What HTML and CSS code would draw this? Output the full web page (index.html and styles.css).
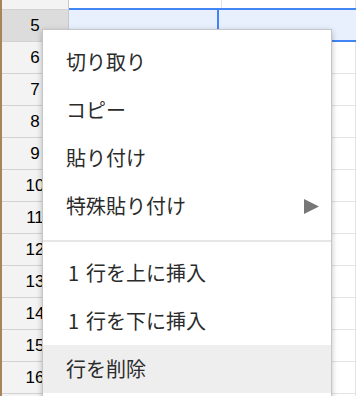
FILE: index.html
```html
<!DOCTYPE html>
<html lang="ja">
<head>
<meta charset="utf-8">
<link rel="stylesheet" href="styles.css">
</head>
<body>
<div class="page">
  <div class="strip"></div>
  <div class="sheet">
    <div class="row"><div class="rh"></div><div class="cell"></div><div class="cell"></div></div>
    <div class="row sel"><div class="rh">5</div><div class="cell active"></div><div class="cell"></div></div>
    <div class="row"><div class="rh">6</div><div class="cell"></div><div class="cell"></div></div>
    <div class="row"><div class="rh">7</div><div class="cell"></div><div class="cell"></div></div>
    <div class="row"><div class="rh">8</div><div class="cell"></div><div class="cell"></div></div>
    <div class="row"><div class="rh">9</div><div class="cell"></div><div class="cell"></div></div>
    <div class="row"><div class="rh">10</div><div class="cell"></div><div class="cell"></div></div>
    <div class="row"><div class="rh">11</div><div class="cell"></div><div class="cell"></div></div>
    <div class="row"><div class="rh">12</div><div class="cell"></div><div class="cell"></div></div>
    <div class="row"><div class="rh">13</div><div class="cell"></div><div class="cell"></div></div>
    <div class="row"><div class="rh">14</div><div class="cell"></div><div class="cell"></div></div>
    <div class="row"><div class="rh">15</div><div class="cell"></div><div class="cell"></div></div>
    <div class="row"><div class="rh">16</div><div class="cell"></div><div class="cell"></div></div>
    <div class="row"><div class="rh"></div><div class="cell"></div><div class="cell"></div></div>
  </div>
  <div class="menu">
    <div class="item">切り取り</div>
    <div class="item">コピー</div>
    <div class="item">貼り付け</div>
    <div class="item"><span>特殊貼り付け</span><svg class="arrow" width="15" height="15" viewBox="0 0 15 15"><polygon points="0,0 15,7.5 0,15" fill="#777"/></svg></div>
    <div class="sep"></div>
    <div class="item"><span class="num">1</span>行を上に挿入</div>
    <div class="item"><span class="num">1</span>行を下に挿入</div>
    <div class="item hover">行を削除</div>
  </div>
</div>
</body>
</html>
```
FILE: styles.css
```css
html, body {
  margin: 0;
  padding: 0;
  background: #fff;
}
body {
  width: 356px;
  height: 396px;
  overflow: hidden;
}
.page {
  position: relative;
  display: flex;
  width: 356px;
  height: 396px;
  overflow: hidden;
}
.strip {
  width: 2px;
  flex: none;
  background: #a8845a;
}
.sheet {
  flex: 1;
  margin-top: -22px;
  display: flex;
  flex-direction: column;
}
.row {
  position: relative;
  display: grid;
  grid-template-columns: 67px 153px 1fr;
  height: 32px;
  flex: none;
}
.rh {
  box-sizing: border-box;
  background: #f3f3f3;
  border-right: 1px solid #c8c8c8;
  border-bottom: 1px solid #d2d2d2;
  font-family: "Liberation Sans", Arial, sans-serif;
  font-size: 17px;
  color: #000;
  display: flex;
  align-items: center;
  justify-content: center;
}
.cell {
  box-sizing: border-box;
  border-bottom: 1px solid #e2e3e3;
  border-right: 1px solid #e2e3e3;
  position: relative;
}
.sel .rh {
  background: #dcdcdc;
}
.sel .cell {
  background: #e8f0fe;
  border-right-color: #e8f0fe;
}
.sel::after {
  content: "";
  position: absolute;
  left: 67px;
  right: 0;
  top: -2px;
  bottom: 0;
  border-top: 2px solid #4285f4;
  border-bottom: 2px solid #4285f4;
  pointer-events: none;
}
.active::after {
  content: "";
  position: absolute;
  top: -2px;
  bottom: 0;
  right: 2px;
  width: 2px;
  background: #4285f4;
}
.menu {
  position: absolute;
  left: 42px;
  top: 29px;
  width: 290px;
  box-sizing: border-box;
  background: #fff;
  border: 1px solid #c6c6c6;
  box-shadow: 0 2px 6px rgba(0, 0, 0, 0.25);
  padding: 8px 0 60px;
  font-family: "Noto Sans CJK JP", "Noto Sans", sans-serif;
  font-size: 20px;
  color: #2b2b2b;
}
.item {
  height: 48px;
  display: flex;
  align-items: center;
  padding: 0 12px 0 23px;
  line-height: 1;
}
.num {
  margin-left: 2px;
  margin-right: 7px;
}
.item.hover {
  background: #eeeeee;
}
.arrow {
  margin-left: auto;
  display: block;
}
.sep {
  height: 2px;
  margin: 10px 0 7px;
  background: #e6e6e6;
}
```
